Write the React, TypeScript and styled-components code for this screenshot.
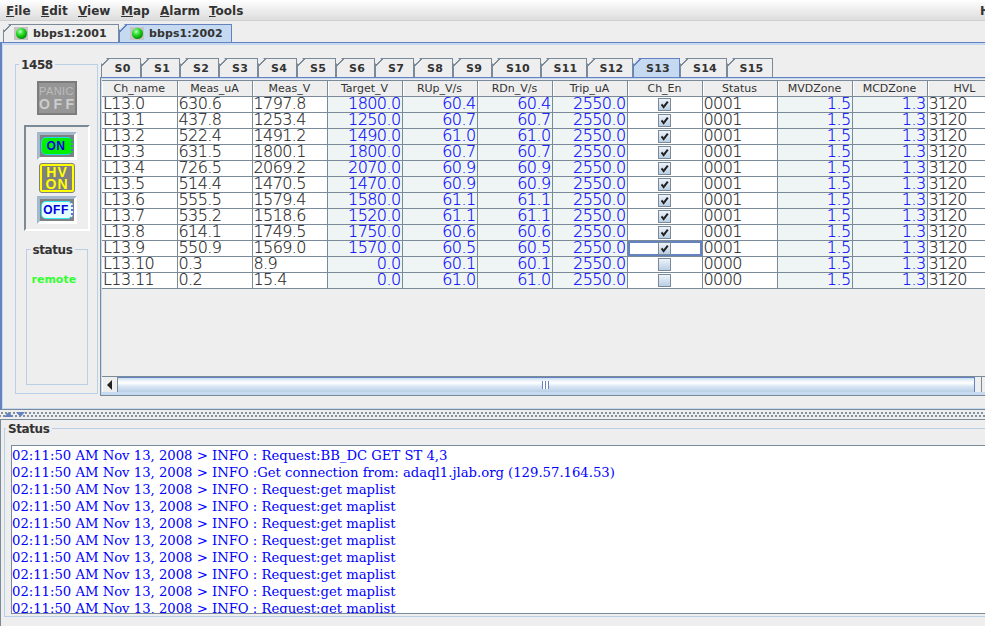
import React from 'react';
import styled, { createGlobalStyle } from 'styled-components';

const GlobalStyle = createGlobalStyle`
  html, body {
    margin: 0;
    height: 100%;
    overflow: hidden;
    background: #eeeeee;
  }
  * { box-sizing: border-box; }
`;

const menus = [
  { label: 'File', width: 35 },
  { label: 'Edit', width: 37 },
  { label: 'View', width: 43 },
  { label: 'Map', width: 39 },
  { label: 'Alarm', width: 49 },
  { label: 'Tools', width: 44 },
];

const sectors = [
  { label: 'S0', width: 40 },
  { label: 'S1', width: 39 },
  { label: 'S2', width: 39 },
  { label: 'S3', width: 39 },
  { label: 'S4', width: 39 },
  { label: 'S5', width: 39 },
  { label: 'S6', width: 39 },
  { label: 'S7', width: 39 },
  { label: 'S8', width: 39 },
  { label: 'S9', width: 39 },
  { label: 'S10', width: 49 },
  { label: 'S11', width: 46 },
  { label: 'S12', width: 46 },
  { label: 'S13', width: 47 },
  { label: 'S14', width: 47 },
  { label: 'S15', width: 46 },
];

const columns = ['Ch_name', 'Meas_uA', 'Meas_V', 'Target_V', 'RUp_V/s', 'RDn_V/s', 'Trip_uA', 'Ch_En', 'Status', 'MVDZone', 'MCDZone', 'HVL'];

const rows = [
  ['L13.0', '630.6', '1797.8', '1800.0', '60.4', '60.4'],
  ['L13.1', '437.8', '1253.4', '1250.0', '60.7', '60.7'],
  ['L13.2', '522.4', '1491.2', '1490.0', '61.0', '61.0'],
  ['L13.3', '631.5', '1800.1', '1800.0', '60.7', '60.7'],
  ['L13.4', '726.5', '2069.2', '2070.0', '60.9', '60.9'],
  ['L13.5', '514.4', '1470.5', '1470.0', '60.9', '60.9'],
  ['L13.6', '555.5', '1579.4', '1580.0', '61.1', '61.1'],
  ['L13.7', '535.2', '1518.6', '1520.0', '61.1', '61.1'],
  ['L13.8', '614.1', '1749.5', '1750.0', '60.6', '60.6'],
  ['L13.9', '550.9', '1569.0', '1570.0', '60.5', '60.5'],
  ['L13.10', '0.3', '8.9', '0.0', '60.1', '60.1'],
  ['L13.11', '0.2', '15.4', '0.0', '61.0', '61.0'],
];

const logLines = [
  '02:11:50 AM Nov 13, 2008 > INFO : Request:BB_DC GET ST 4,3',
  '02:11:50 AM Nov 13, 2008 > INFO :Get connection from: adaql1.jlab.org (129.57.164.53)',
  ...Array(8).fill('02:11:50 AM Nov 13, 2008 > INFO : Request:get maplist'),
];

export default function App() {
  return (
    <Frame>
      <GlobalStyle />
      <MenuBar>
        {menus.map((menu) => (
          <MenuItem key={menu.label} $width={menu.width}>
            <u>{menu.label[0]}</u>
            {menu.label.slice(1)}
          </MenuItem>
        ))}
        <HelpItem>Help</HelpItem>
      </MenuBar>

      <HostTabs>
        <HostTab $width={116}>
          <Led />
          bbps1:2001
        </HostTab>
        <HostTab $width={113} $selected>
          <Led />
          bbps1:2002
        </HostTab>
      </HostTabs>

      <HostPane>
        <SideColumn>
          <TitledBox>
            <BoxTitle $left={3}>1458</BoxTitle>
            <PanicButton>
              <span>PANIC</span>
              <strong>OFF</strong>
            </PanicButton>
            <SwitchGroup>
              <PillFrame>
                <Pill $bg="#00f000" $edge="#20d8e8">ON</Pill>
              </PillFrame>
              <HvLamp>
                <span>HV</span>
                <span>ON</span>
              </HvLamp>
              <PillFrame>
                <Pill $bg="#e4ffff" $edge="#30e8f0">OFF</Pill>
              </PillFrame>
            </SwitchGroup>
            <StatusBox>
              <BoxTitle $left={4}>status</BoxTitle>
              <RemoteLabel>remote</RemoteLabel>
            </StatusBox>
          </TitledBox>
        </SideColumn>

        <SectorArea>
          <SectorTabs>
            {sectors.map((sector) => (
              <SectorTab key={sector.label} $width={sector.width} $selected={sector.label === 'S13'}>
                {sector.label}
              </SectorTab>
            ))}
          </SectorTabs>
          <SectorPane>
            <TableView>
              <ChannelTable>
                <thead>
                  <tr>
                    {columns.map((column) => (
                      <HeaderCell key={column}>{column}</HeaderCell>
                    ))}
                  </tr>
                </thead>
                <tbody>
                  {rows.map((row, r) => {
                    const enabled = r < 10;
                    return (
                      <tr key={row[0]}>
                        <Cell>{row[0]}</Cell>
                        <Cell>{row[1]}</Cell>
                        <Cell>{row[2]}</Cell>
                        <Cell $edit>{row[3]}</Cell>
                        <Cell $edit>{row[4]}</Cell>
                        <Cell $edit>{row[5]}</Cell>
                        <Cell $edit>2550.0</Cell>
                        <CheckCell $focus={r === 9}>
                          <CheckBox>
                            {enabled && (
                              <svg width="9" height="9" viewBox="0 0 9 9">
                                <path d="M1.6 4.4 L3.6 7 L7.8 1.6" fill="none" stroke="#222" strokeWidth="2" />
                              </svg>
                            )}
                          </CheckBox>
                        </CheckCell>
                        <Cell>{enabled ? '0001' : '0000'}</Cell>
                        <Cell $edit>1.5</Cell>
                        <Cell $edit>1.3</Cell>
                        <Cell>3120</Cell>
                      </tr>
                    );
                  })}
                </tbody>
              </ChannelTable>
            </TableView>
            <ScrollBar>
              <ScrollButton>
                <svg width="6" height="10" viewBox="0 0 6 10">
                  <path d="M5 0 L5 10 L0 5 Z" fill="#222" />
                </svg>
              </ScrollButton>
              <ScrollThumb>
                <Grip />
              </ScrollThumb>
              <ScrollEnd />
            </ScrollBar>
          </SectorPane>
        </SectorArea>
      </HostPane>

      <Splitter>
        <SplitArrow width="9" height="5" viewBox="0 0 9 5">
          <path d="M4.5 0 L9 5 L0 5 Z" fill="#6382bf" />
        </SplitArrow>
        <SplitArrow width="9" height="5" viewBox="0 0 9 5">
          <path d="M0 0 L9 0 L4.5 5 Z" fill="#6382bf" />
        </SplitArrow>
      </Splitter>

      <StatusPanel>
        <StatusFrame>
          <BoxTitle $left={1}>Status</BoxTitle>
          <LogView>
            {logLines.map((line, i) => (
              <LogLine key={i}>{line}</LogLine>
            ))}
          </LogView>
        </StatusFrame>
      </StatusPanel>
    </Frame>
  );
}

const Frame = styled.div`
  width: 1005px;
  height: 626px;
  display: flex;
  flex-direction: column;
  background: #eeeeee;
  overflow: hidden;
  font-family: "DejaVu Sans", sans-serif;
  color: #333333;
`;

const MenuBar = styled.div`
  height: 21px;
  flex: none;
  display: flex;
  align-items: center;
  padding-left: 6px;
  background: linear-gradient(#ffffff 0%, #f4f4f4 30%, #dddddd 100%);
  border-bottom: 1px solid #cfcfcf;
`;

const MenuItem = styled.div<{ $width: number }>`
  width: ${(p) => p.$width}px;
  font-size: 12px;
  font-weight: bold;
  color: #333333;
  padding-top: 2px;
`;

const HelpItem = styled.div`
  margin-left: auto;
  width: 25px;
  font-size: 12px;
  font-weight: bold;
  padding-top: 2px;
`;

const HostTabs = styled.div`
  height: 21px;
  flex: none;
  display: flex;
  align-items: flex-end;
  padding-left: 3px;
`;

const HostTab = styled.div<{ $width: number; $selected?: boolean }>`
  position: relative;
  width: ${(p) => p.$width}px;
  height: 18px;
  display: flex;
  align-items: center;
  gap: 5px;
  padding-left: 10px;
  font-size: 11px;
  font-weight: bold;
  letter-spacing: 0.1px;
  background: ${(p) => (p.$selected ? '#c5daf0' : '#eeeeee')};
  border-top: 1px solid ${(p) => (p.$selected ? '#6382bf' : '#7a8a99')};
  border-right: 1px solid ${(p) => (p.$selected ? '#6382bf' : '#7a8a99')};
  border-left: 1px solid ${(p) => (p.$selected ? '#6382bf' : '#7a8a99')};
  clip-path: polygon(6px 0, 100% 0, 100% 100%, 0 100%, 0 6px);

  &::before {
    content: '';
    position: absolute;
    top: -1px;
    left: -1px;
    width: 8px;
    height: 8px;
    background: linear-gradient(135deg, transparent 44%, ${(p) => (p.$selected ? '#6382bf' : '#7a8a99')} 44%, ${(p) => (p.$selected ? '#6382bf' : '#7a8a99')} 60%, transparent 60%);
  }
`;

const Led = styled.span`
  width: 14px;
  height: 13px;
  flex: none;
  display: flex;
  align-items: center;
  justify-content: center;
  background: #c4c4c4;

  &::after {
    content: '';
    width: 11px;
    height: 11px;
    border-radius: 50%;
    background: radial-gradient(circle at 38% 32%, #b8ffb8 0%, #30e030 32%, #08a808 62%, #066806 100%);
  }
`;

const HostPane = styled.div`
  height: 368px;
  flex: none;
  display: flex;
  gap: 2px;
  padding: 15px 0 0 13px;
  border-top: 1px solid #6382bf;
  border-bottom: 1px solid #7a8a99;
  border-left: 2px solid #6382bf;
  box-shadow: inset 0 2px 0 #c5daf0, inset 1px 0 0 #c5daf0, inset 0 -1px 0 #c5daf0;
`;

const SideColumn = styled.div`
  width: 83px;
  flex: none;
  padding-top: 6px;
  height: 336px;
`;

const TitledBox = styled.div`
  position: relative;
  width: 83px;
  height: 330px;
  border: 1px solid #b8cfe5;
  display: flex;
  flex-direction: column;
  align-items: center;
  padding-top: 16px;
`;

const BoxTitle = styled.div<{ $left: number }>`
  position: absolute;
  top: -6px;
  left: ${(p) => p.$left}px;
  padding: 0 2px;
  background: #eeeeee;
  font-size: 12px;
  line-height: 12px;
  letter-spacing: -0.4px;
  font-weight: bold;
  color: #333333;
`;

const PanicButton = styled.div`
  width: 40px;
  height: 34px;
  flex: none;
  display: flex;
  flex-direction: column;
  align-items: center;
  justify-content: center;
  background: #969696;
  border: 2px solid #7c7c7c;
  color: #bcbcbc;
  font-family: "Liberation Sans", sans-serif;

  span {
    font-size: 11px;
    line-height: 13px;
    letter-spacing: 0.4px;
  }

  strong {
    font-size: 14px;
    line-height: 13px;
    letter-spacing: 3.5px;
    margin-right: -3.5px;
    color: #cccccc;
  }
`;

const SwitchGroup = styled.div`
  width: 66px;
  height: 106px;
  margin-top: 10px;
  flex: none;
  display: flex;
  flex-direction: column;
  align-items: center;
  gap: 3px;
  padding-top: 5px;
  border: 2px solid;
  border-color: #7a8a99 #ffffff #ffffff #7a8a99;
`;

const PillFrame = styled.div`
  width: 40px;
  height: 28px;
  display: flex;
  align-items: center;
  justify-content: center;
  background: #808080;
  border: 3px solid;
  border-color: #a3b8cc #ffffff #ffffff #a3b8cc;
`;

const Pill = styled.div<{ $bg: string; $edge: string }>`
  width: 32px;
  height: 18px;
  display: flex;
  align-items: center;
  justify-content: center;
  border-radius: 5px;
  background: ${(p) => p.$bg};
  border: 1px solid ${(p) => p.$edge};
  border-right: 2px dotted #5a6cf0;
  color: #0000e0;
  font-family: "Liberation Sans", sans-serif;
  font-size: 12px;
  font-weight: bold;
  letter-spacing: 0.5px;
`;

const HvLamp = styled.div`
  width: 36px;
  height: 30px;
  flex: none;
  display: flex;
  flex-direction: column;
  align-items: center;
  justify-content: center;
  background: #808080;
  border: 1px solid #808080;
  outline: 2px solid #ffff00;
  outline-offset: -3px;
  border-radius: 3px;
  color: #ffff00;
  font-size: 14px;
  line-height: 12px;
  font-weight: bold;
  font-family: "Liberation Sans", sans-serif;
  letter-spacing: 1.2px;

  span {
    margin-right: -1.2px;
  }
`;

const StatusBox = styled.div`
  position: relative;
  width: 62px;
  height: 136px;
  flex: none;
  margin-top: 18px;
  border: 1px solid #b8cfe5;
  padding: 23px 0 0 5px;
`;

const RemoteLabel = styled.div`
  font-size: 11px;
  font-weight: bold;
  color: #33ff33;
`;

const SectorArea = styled.div`
  flex: 1;
  min-width: 0;
  display: flex;
  flex-direction: column;
`;

const SectorTabs = styled.div`
  height: 19px;
  flex: none;
  display: flex;
  align-items: flex-end;
  padding-left: 1px;
`;

const SectorTab = styled.div<{ $width: number; $selected?: boolean }>`
  position: relative;
  width: ${(p) => p.$width}px;
  height: 19px;
  flex: none;
  display: flex;
  align-items: center;
  justify-content: center;
  padding-left: 3px;
  font-size: 11px;
  font-weight: bold;
  letter-spacing: 0.3px;
  background: ${(p) => (p.$selected ? '#c5daf0' : '#eeeeee')};
  border-top: 1px solid ${(p) => (p.$selected ? '#6382bf' : '#7a8a99')};
  border-right: 1px solid ${(p) => (p.$selected ? '#6382bf' : '#7a8a99')};
  border-left: 1px solid ${(p) => (p.$selected ? '#6382bf' : '#7a8a99')};
  clip-path: polygon(6px 0, 100% 0, 100% 100%, 0 100%, 0 6px);

  &::before {
    content: '';
    position: absolute;
    top: -1px;
    left: -1px;
    width: 8px;
    height: 8px;
    background: linear-gradient(135deg, transparent 44%, ${(p) => (p.$selected ? '#6382bf' : '#7a8a99')} 44%, ${(p) => (p.$selected ? '#6382bf' : '#7a8a99')} 60%, transparent 60%);
  }
`;

const SectorPane = styled.div`
  width: 100%;
  height: 319px;
  flex: none;
  display: flex;
  flex-direction: column;
  border-top: 1px solid #6382bf;
  border-left: 1px solid #7a8a99;
  border-bottom: 1px solid #7a8a99;
  padding: 2px 0 3px 1px;
  box-shadow: inset 1px 0 0 #c5daf0, inset 0 -3px 0 #c5daf0, inset 0 1px 0 #c5daf0;
`;

const TableView = styled.div`
  flex: 1;
  min-height: 0;
`;

const ChannelTable = styled.table`
  table-layout: fixed;
  width: 900px;
  border-collapse: collapse;
  border-spacing: 0;
  border-top: 1px solid #7a8a99;
`;

const HeaderCell = styled.th`
  width: 75px;
  height: 16px;
  padding: 0;
  background: #eeeeee;
  border-right: 1px solid #7a8a99;
  border-bottom: 1px solid #7a8a99;
  box-shadow: inset 1px 0 0 #ffffff;
  font-size: 11px;
  line-height: 14px;
  font-weight: normal;
  color: #333333;
  text-align: center;
  overflow: hidden;
`;

const Cell = styled.td<{ $edit?: boolean }>`
  height: 16px;
  padding: 0 1px 1px;
  border-right: 1px solid #7a8a99;
  border-bottom: 1px solid #7a8a99;
  background: ${(p) => (p.$edit ? '#eff5f5' : '#ffffff')};
  color: ${(p) => (p.$edit ? '#0000ff' : '#222222')};
  text-align: ${(p) => (p.$edit ? 'right' : 'left')};
  font-size: 16px;
  font-weight: 200;
  letter-spacing: -0.6px;
  -webkit-text-stroke: 0.15px currentColor;
  line-height: 14px;
  white-space: nowrap;
  overflow: hidden;
`;

const CheckCell = styled.td<{ $focus?: boolean }>`
  height: 16px;
  padding: 0;
  background: #ffffff;
  border-right: 1px solid #7a8a99;
  border-bottom: 1px solid #7a8a99;
  box-shadow: ${(p) => (p.$focus ? 'inset 0 0 0 2px #6382bf' : 'none')};
  vertical-align: middle;
`;

const CheckBox = styled.div`
  width: 13px;
  height: 13px;
  margin: 0 auto;
  display: flex;
  align-items: center;
  justify-content: center;
  background: linear-gradient(#eef3f9, #b8cfe5);
  border: 1px solid #7a8a99;
`;

const ScrollBar = styled.div`
  height: 16px;
  flex: none;
  display: flex;
  border-top: 1px solid #7a8a99;
`;

const ScrollButton = styled.div`
  width: 16px;
  flex: none;
  display: flex;
  align-items: center;
  justify-content: center;
  background: #eeeeee;
  border-left: 1px solid #ffffff;
  border-right: 1px solid #7a8a99;
`;

const ScrollThumb = styled.div`
  width: 857px;
  flex: none;
  display: flex;
  align-items: center;
  justify-content: center;
  border-top: 1px solid #6382bf;
  border-right: 1px solid #6382bf;
  background: linear-gradient(#c8dcf0 0%, #eef4fa 20%, #ffffff 35%, #d8e6f4 60%, #b8cfe5 100%);
  padding-right: 2px;
`;

const Grip = styled.span`
  width: 7px;
  height: 8px;
  background: repeating-linear-gradient(90deg, #6382bf 0 1px, #ffffff 1px 3px);
`;

const ScrollEnd = styled.div`
  flex: 1;
  margin-left: 6px;
  border-left: 1px solid #7a8a99;
  background: #eeeeee;
`;

const Splitter = styled.div`
  height: 10px;
  flex: none;
  display: flex;
  align-items: center;
  gap: 3px;
  padding-left: 4px;
  background-color: #eeeeee;
  background-image: radial-gradient(#7a8a99 0.7px, transparent 0.8px), radial-gradient(#7a8a99 0.7px, transparent 0.8px);
  background-size: 4px 4px;
  background-position: 0 1px, 2px 4px;
  background-repeat: repeat-x;
  border-bottom: 1px solid #7a8a99;
`;

const SplitArrow = styled.svg`
  flex: none;
`;

const StatusPanel = styled.div`
  flex: 1;
  min-height: 0;
  padding: 8px 0 0 3px;
  border-left: 1px solid #7a8a99;
`;

const StatusFrame = styled.div`
  position: relative;
  height: 189px;
  border: 1px solid #b8cfe5;
  padding: 16px 0 3px 6px;
`;

const LogView = styled.div`
  height: 169px;
  overflow: hidden;
  background: #ffffff;
  border: 1px solid #7a8a99;
  padding-top: 1px;
`;

const LogLine = styled.div`
  height: 17px;
  line-height: 17px;
  font-family: "DejaVu Serif", serif;
  font-size: 13.2px;
  color: #0000ff;
  white-space: nowrap;
`;
